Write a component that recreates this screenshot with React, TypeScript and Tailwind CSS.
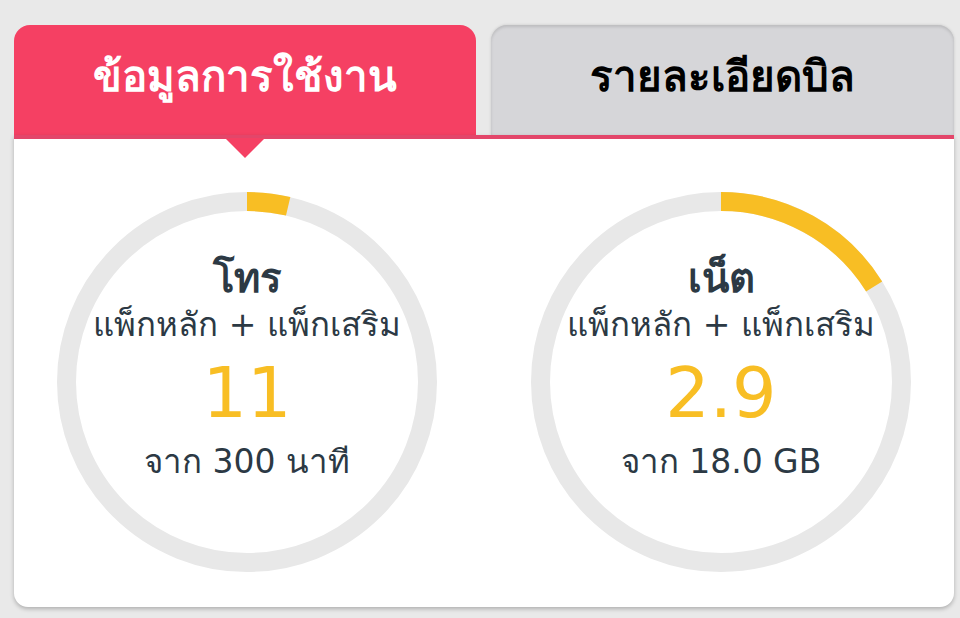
import React from "react";

const font = { fontFamily: '"DejaVu Sans", "Noto Sans", sans-serif' };

function Ring({ value, max }: { value: number; max: number }) {
  const r = 180.5;
  const c = 2 * Math.PI * r;
  const used = (value / max) * c;
  return (
    <svg width="380" height="380" viewBox="0 0 380 380" className="absolute inset-0">
      <circle cx="190" cy="190" r={r} fill="none" stroke="#e8e8e8" strokeWidth="19" />
      <circle
        cx="190"
        cy="190"
        r={r}
        fill="none"
        stroke="#f8be24"
        strokeWidth="19"
        strokeDasharray={`${used} ${c}`}
        transform="rotate(-90 190 190)"
      />
    </svg>
  );
}

function Gauge({
  title,
  value,
  max,
  label,
  total,
}: {
  title: string;
  value: number;
  max: number;
  label: string;
  total: string;
}) {
  return (
    <div className="relative w-[380px] h-[380px]">
      <Ring value={value} max={max} />
      <div className="relative flex flex-col items-center pt-[60px] text-[#2c3944]">
        <div className="text-[40px] font-bold leading-[52px]">{title}</div>
        <div className="text-[33px] leading-[40px] mt-[1px] whitespace-nowrap">แพ็กหลัก + แพ็กเสริม</div>
        <div className="text-[70px] leading-[80px] text-[#f8be24] mt-[8px]">{label}</div>
        <div className="text-[33px] leading-[40px] mt-[9px] whitespace-nowrap">{total}</div>
      </div>
    </div>
  );
}

export default function App() {
  return (
    <div className="w-[960px] h-[618px] bg-[#e9e9e9] pt-[25px] pl-[14px] pr-[6px]" style={font}>
      <div className="flex gap-[15px] h-[110px]">
        <div className="w-[462px] bg-[#f54063] rounded-t-[16px] flex items-center justify-center pb-[8px]">
          <span className="text-white text-[42px] font-bold">ข้อมูลการใช้งาน</span>
        </div>
        <div className="flex-1 bg-[#d6d6d9] rounded-t-[16px] flex items-center justify-center pb-[8px] shadow-[inset_0_2px_3px_rgba(0,0,0,0.12),0_0_3px_rgba(0,0,0,0.15)]">
          <span className="text-black text-[42px] font-bold">รายละเอียดบิล</span>
        </div>
      </div>
      <div className="relative bg-white border-t-4 border-[#e3466a] rounded-b-[14px] h-[472px] shadow-[0_2px_4px_rgba(0,0,0,0.25)]">
        <div className="absolute left-[211px] -top-[1px] w-0 h-0 border-l-[20px] border-r-[20px] border-t-[20px] border-l-transparent border-r-transparent border-t-[#f54063]" />
        <div className="flex justify-between px-[43px] pt-[53px]">
          <Gauge title="โทร" value={11} max={300} label="11" total="จาก 300 นาที" />
          <Gauge title="เน็ต" value={2.9} max={18} label="2.9" total="จาก 18.0 GB" />
        </div>
      </div>
    </div>
  );
}
